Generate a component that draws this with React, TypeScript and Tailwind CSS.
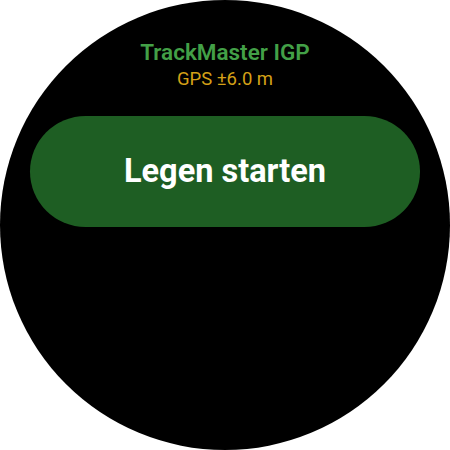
export default function App() {
  return (
    <div className="w-[450px] h-[450px] bg-white" style={{ fontFamily: 'Roboto, sans-serif' }}>
      <div className="w-[450px] h-[450px] rounded-full bg-black flex flex-col items-center overflow-hidden">
        <div className="mt-[37px] text-[22.5px] leading-[30px] font-semibold text-[#43a047]">TrackMaster IGP</div>
        <div className="mt-[0px] text-[18.5px] leading-[24px] text-[#d4a017]">GPS ±6.0 m</div>
        <button className="mt-[25px] w-[390px] h-[111px] rounded-full bg-[#1e5e23] text-white text-[32.5px] font-bold">
          Legen starten
        </button>
      </div>
    </div>
  )
}
